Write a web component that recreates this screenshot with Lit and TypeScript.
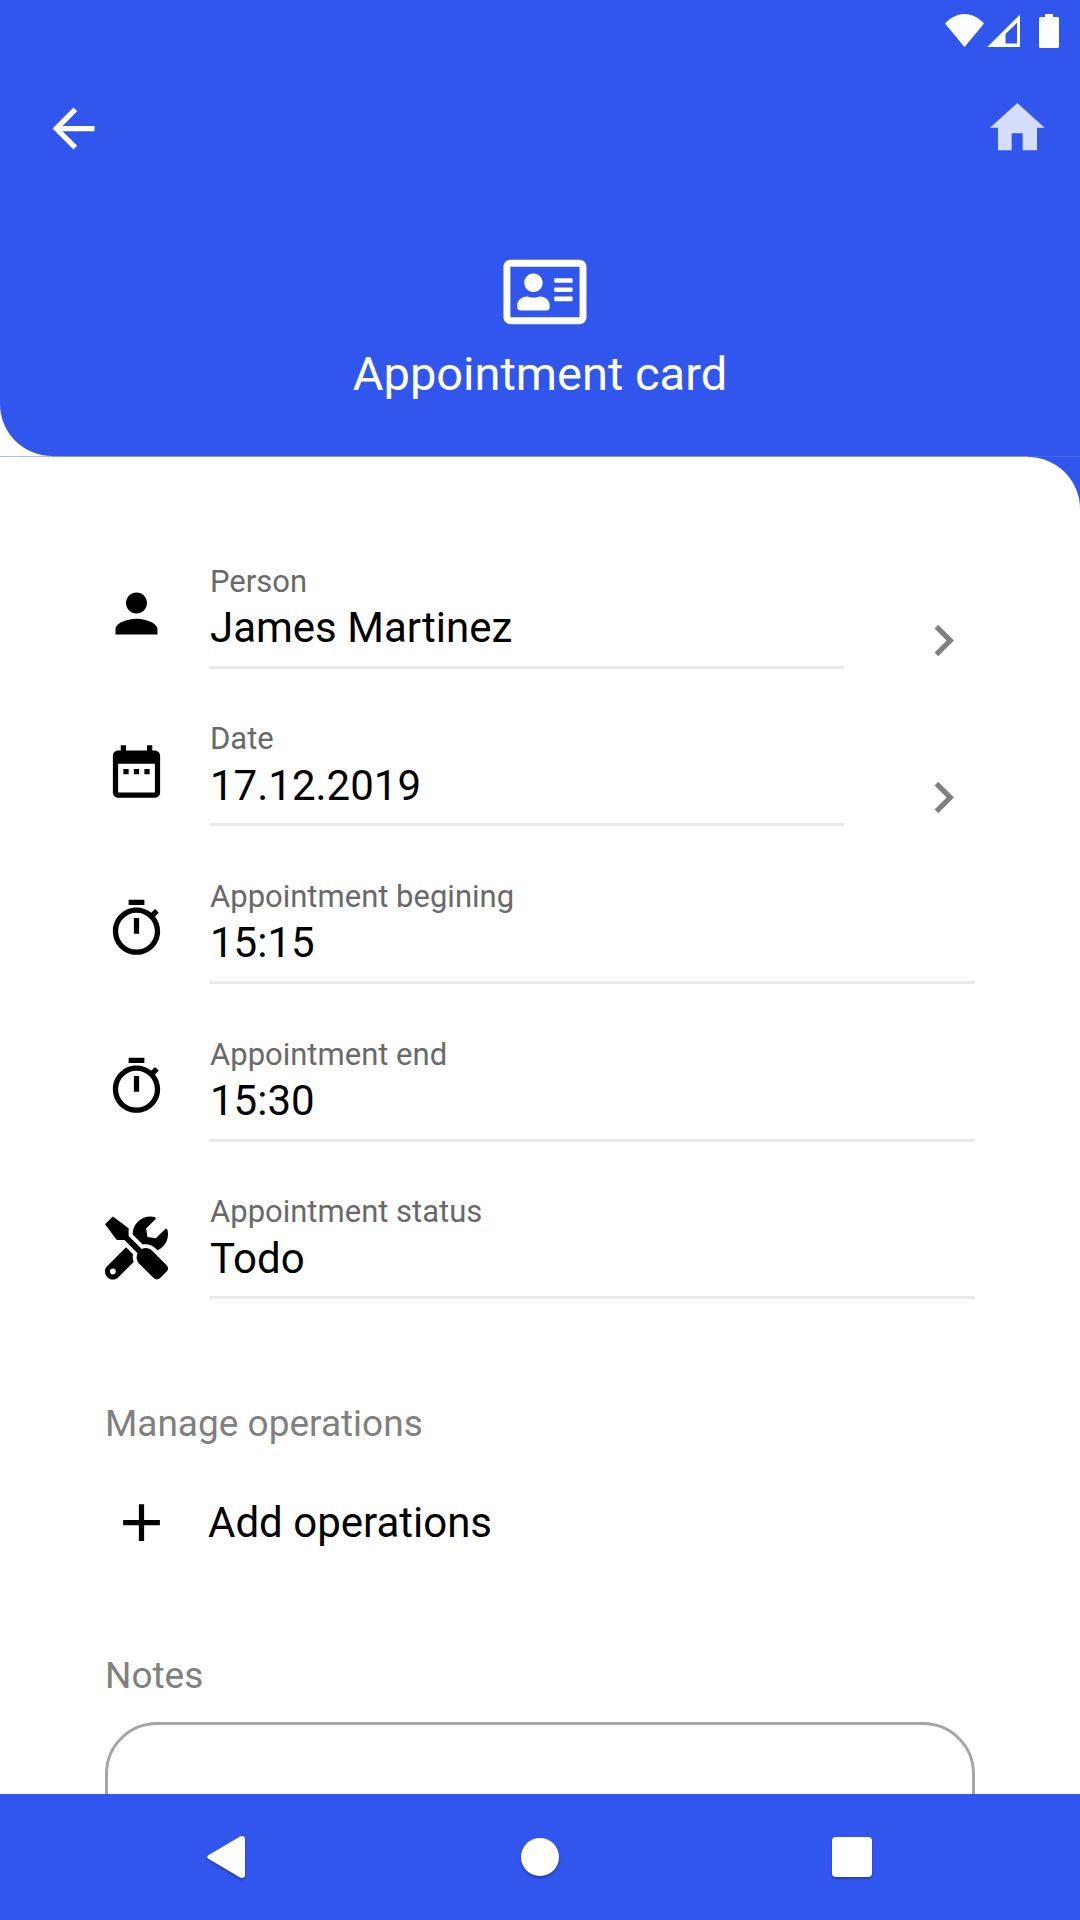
import { LitElement, html, css, svg, nothing } from "lit";
import { customElement, state } from "lit/decorators.js";

const PERSON = svg`<path d="M12 12c2.21 0 4-1.79 4-4s-1.79-4-4-4-4 1.79-4 4 1.79 4 4 4zm0 2c-2.67 0-8 1.34-8 4v2h16v-2c0-2.66-5.33-4-8-4z"/>`;
const CALENDAR = svg`<path d="M9 11H7v2h2v-2zm4 0h-2v2h2v-2zm4 0h-2v2h2v-2zm2-7h-1V2h-2v2H8V2H6v2H5c-1.11 0-1.99.9-1.99 2L3 20c0 1.1.89 2 2 2h14c1.1 0 2-.9 2-2V6c0-1.1-.9-2-2-2zm0 16H5V9h14v11z"/>`;
const TIMER = svg`<path d="M15 1H9v2h6V1zm-4 13h2V8h-2v6zm8.03-6.61l1.42-1.42c-.43-.51-.9-.99-1.41-1.41l-1.42 1.42C16.07 4.74 14.12 4 12 4c-4.97 0-9 4.03-9 9s4.02 9 9 9 9-4.03 9-9c0-2.12-.74-4.07-1.97-5.61zM12 20c-3.87 0-7-3.13-7-7s3.13-7 7-7 7 3.13 7 7-3.13 7-7 7z"/>`;
const TOOLS = svg`<path d="M501.1 395.7L384 278.6c-23.1-23.1-57.6-27.6-85.4-13.9L192 158.1V96L64 0 0 64l96 128h62.1l106.6 106.6c-13.6 27.8-9.2 62.3 13.9 85.4l117.1 117.1c14.6 14.6 38.2 14.6 52.7 0l52.7-52.7c14.5-14.6 14.5-38.2 0-52.7zM331.7 225c28.3 0 54.9 11 74.9 31l19.4 19.4c15.8-6.9 30.8-16.5 43.8-29.5 37.1-37.1 49.7-89.3 37.9-136.7-2.2-9-13.5-12.1-20.1-5.5l-74.4 74.4-67.9-11.3L334 98.9l74.4-74.4c6.6-6.6 3.4-17.9-5.7-20.2-47.4-11.7-99.6.9-136.6 37.9-28.5 28.5-41.9 66.1-41.2 103.6l82.1 82.1c8.1-1.9 16.5-2.9 24.7-2.9zm-103.9 82l-56.7-56.7L18.7 402.8c-25 25-25 65.5 0 90.5s65.5 25 90.5 0l123.6-123.6c-7.6-19.9-9.9-41.6-5-62.7zM64 472c-13.2 0-24-10.8-24-24 0-13.3 10.7-24 24-24s24 10.7 24 24c0 13.2-10.7 24-24 24z"/>`;

const BOX = "0 0 24 24";

interface Field {
  id: string;
  label: string;
  value: string;
  icon: unknown;
  viewBox: string;
  opens: boolean;
}

@customElement("app-root")
export class AppRoot extends LitElement {
  @state() private fields: Field[] = [
    { id: "person", label: "Person", value: "James Martinez", icon: PERSON, viewBox: BOX, opens: true },
    { id: "date", label: "Date", value: "17.12.2019", icon: CALENDAR, viewBox: BOX, opens: true },
    { id: "begin", label: "Appointment begining", value: "15:15", icon: TIMER, viewBox: BOX, opens: false },
    { id: "end", label: "Appointment end", value: "15:30", icon: TIMER, viewBox: BOX, opens: false },
    { id: "status", label: "Appointment status", value: "Todo", icon: TOOLS, viewBox: "0 -28 512 512", opens: false },
  ];

  static styles = css`
    :host {
      --blue: #3156ee;
      display: flex;
      flex-direction: column;
      height: 100vh;
      background: #fff;
      color: #000;
      font-family: Roboto, "Liberation Sans", sans-serif;
    }
    * {
      box-sizing: border-box;
    }
    svg {
      display: block;
      fill: currentColor;
      overflow: visible;
    }
    button,
    a {
      display: block;
      margin: 0;
      padding: 0;
      border: 0;
      background: none;
      color: inherit;
      font: inherit;
      text-decoration: none;
      cursor: pointer;
    }
    .icon {
      width: 63px;
      height: 63px;
    }
    .scroll {
      flex: 1;
      min-height: 0;
      overflow-y: auto;
      scrollbar-width: none;
    }
    .header {
      height: 456px;
      background: var(--blue);
      color: #fff;
      border-bottom-left-radius: 52px;
    }
    .seam {
      height: 1px;
      background: linear-gradient(to right, #adb9f8 52px, #8297f5 52px calc(100% - 52px), #4a69f0 calc(100% - 52px));
    }
    .status {
      display: flex;
      justify-content: flex-end;
      height: 63px;
      padding: 14px 21px 0 0;
    }
    .bar {
      display: flex;
      justify-content: space-between;
      align-items: center;
      height: 131px;
      padding: 0 35px 0 42px;
    }
    .home {
      padding-bottom: 3px;
      color: #d6ddfb;
    }
    .hero {
      display: flex;
      flex-direction: column;
      align-items: center;
      padding-top: 61px;
    }
    h1 {
      margin: 17px 0 0;
      font-size: 47px;
      line-height: 56px;
      font-weight: 400;
    }
    .under {
      background: var(--blue);
    }
    .sheet {
      padding: 78px 105px 52px;
      background: #fff;
      border-top-right-radius: 52px;
    }
    .fields {
      display: grid;
      grid-auto-rows: 1fr;
      min-height: 788px;
    }
    .row {
      display: flex;
      align-items: center;
      gap: 42px;
    }
    .field {
      flex: 1;
      min-width: 0;
      margin-top: 5px;
      border-bottom: 3px solid #e9e9e9;
    }
    .field label {
      display: block;
      margin-bottom: 3px;
      color: #696969;
      font-size: 31px;
      line-height: 36px;
    }
    .field input {
      display: block;
      width: 100%;
      height: 63px;
      padding: 0 0 13px;
      border: 0;
      outline: 0;
      background: none;
      color: #000;
      font: inherit;
      font-size: 42px;
      line-height: 50px;
    }
    .more {
      margin: 53px 0 0 26px;
      color: #808080;
    }
    h2,
    .notes-label {
      display: block;
      margin: 0;
      color: #808080;
      font-size: 37px;
      line-height: 44px;
      font-weight: 400;
    }
    h2 {
      margin-top: 79px;
    }
    .add {
      display: flex;
      align-items: center;
      gap: 35px;
      margin: 45px 0 100px 5px;
      font-size: 42px;
      line-height: 50px;
    }
    .notes {
      display: block;
      width: 100%;
      height: 262px;
      margin-top: 24px;
      padding: 26px 42px;
      border: 3px solid #a6a6a6;
      border-radius: 52px;
      outline: 0;
      resize: none;
      font: inherit;
      font-size: 42px;
    }
    .nav {
      display: grid;
      grid-template-columns: repeat(3, 1fr);
      height: 126px;
      padding: 0 72px;
      background: var(--blue);
      color: #fff;
    }
    .nav button {
      display: grid;
      place-items: center;
    }
    .nav svg {
      filter: drop-shadow(0 2px 1px rgba(0, 0, 0, 0.25));
    }
  `;

  private edit(index: number, event: Event) {
    const value = (event.target as HTMLInputElement).value;
    this.fields = this.fields.map((f, i) => (i === index ? { ...f, value } : f));
  }

  private row(f: Field, index: number) {
    return html`<div class="row">
      <svg class="icon" viewBox=${f.viewBox} aria-hidden="true">${f.icon}</svg>
      <div class="field">
        <label for=${f.id}>${f.label}</label>
        <input id=${f.id} type="text" .value=${f.value} @change=${(e: Event) => this.edit(index, e)} />
      </div>
      ${f.opens
        ? html`<button class="more" type="button" aria-label=${`Choose ${f.label.toLowerCase()}`}>
            <svg class="icon" viewBox="0 0 24 24"><path d="M10 6L8.59 7.41 13.17 12l-4.58 4.59L10 18l6-6z" /></svg>
          </button>`
        : nothing}
    </div>`;
  }

  render() {
    return html`
      <div class="scroll">
        <header class="header">
          <div class="status" aria-hidden="true">
            <svg width="114" height="34" viewBox="0 0 114 34">
              <path d="M0 9.500C5 4 12 0 19.500 0S34 4 39 9.500L19.500 33z" />
              <path fill-rule="evenodd" d="M75 .5V33H42.300zM72 8.700L60.500 20V29.500H72z" />
              <path d="M100 0h8v3h4.500a1.500 1.500 0 0 1 1.500 1.500v28a1.500 1.500 0 0 1-1.500 1.500h-17a1.500 1.500 0 0 1-1.500-1.500v-28a1.500 1.500 0 0 1 1.500-1.500h4.500z" />
            </svg>
          </div>
          <nav class="bar">
            <button type="button" aria-label="Back">
              <svg class="icon" viewBox="0 0 24 24">
                <path d="M20 11H7.830l5.590-5.590L12 4l-8 8 8 8 1.410-1.410L7.830 13H20v-2z" />
              </svg>
            </button>
            <a class="home" href="#home" aria-label="Home">
              <svg width="55" height="48" viewBox="0 0 165 144">
                <path d="M82 0L0 74H24V142H65V91H98V142H141V74H164z" />
              </svg>
            </a>
          </nav>
          <div class="hero">
            <svg width="83" height="74" viewBox="-31 0 576 512" aria-hidden="true">
              <path
                d="M528 32H48C21.500 32 0 53.500 0 80v352c0 26.500 21.500 48 48 48h480c26.500 0 48-21.500 48-48V80c0-26.500-21.500-48-48-48zm0 400H48V80h480v352zM208 256c35.300 0 64-28.700 64-64s-28.700-64-64-64-64 28.700-64 64 28.700 64 64 64zm-89.600 128h179.200c12.400 0 22.400-8.600 22.400-19.200v-19.200c0-31.800-30.100-57.600-67.200-57.600-10.800 0-18.700 8-44.800 8-26.900 0-33.400-8-44.800-8-37.100 0-67.200 25.800-67.200 57.600v19.200c0 10.600 10 19.200 22.400 19.200zM360 320h112c4.400 0 8-3.600 8-8v-16c0-4.400-3.600-8-8-8H360c-4.400 0-8 3.600-8 8v16c0 4.400 3.600 8 8 8zm0-64h112c4.400 0 8-3.600 8-8v-16c0-4.400-3.600-8-8-8H360c-4.400 0-8 3.600-8 8v16c0 4.400 3.600 8 8 8zm0-64h112c4.400 0 8-3.600 8-8v-16c0-4.400-3.600-8-8-8H360c-4.400 0-8 3.600-8 8v16c0 4.400 3.600 8 8 8z"
              />
            </svg>
            <h1>Appointment card</h1>
          </div>
        </header>
        <div class="seam"></div>
        <div class="under">
          <main class="sheet">
            <div class="fields">${this.fields.map((f, i) => this.row(f, i))}</div>
            <h2>Manage operations</h2>
            <button class="add" type="button">
              <svg class="icon" viewBox="0 0 24 24" aria-hidden="true"><path d="M19 13h-6v6h-2v-6H5v-2h6V5h2v6h6v2z" /></svg>
              Add operations
            </button>
            <label class="notes-label" for="notes">Notes</label>
            <textarea class="notes" id="notes"></textarea>
          </main>
        </div>
      </div>
      <nav class="nav" aria-label="System">
        <button type="button" aria-label="System back">
          <svg width="42" height="42" viewBox="0 0 42 42">
            <path d="M1 19.500L33 .5Q37.500-1 38 3V39Q37.500 43 33 41.500L1 22.500Q-.5 21 1 19.500z" />
          </svg>
        </button>
        <button type="button" aria-label="System home">
          <svg width="40" height="40" viewBox="0 0 40 40"><circle cx="20" cy="20" r="19" /></svg>
        </button>
        <button type="button" aria-label="Recent apps">
          <svg width="40" height="40" viewBox="0 0 40 40"><rect width="40" height="40" rx="4" /></svg>
        </button>
      </nav>
    `;
  }
}
